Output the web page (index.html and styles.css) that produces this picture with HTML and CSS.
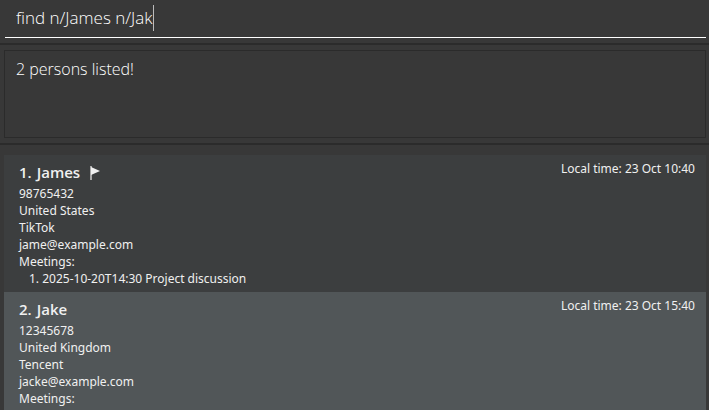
FILE: index.html
```html
<!DOCTYPE html>
<html lang="en">
<head>
<meta charset="utf-8">
<title>Contacts</title>
<link rel="stylesheet" href="styles.css">
</head>
<body>
<main class="app">
  <form class="command">
    <div class="command-line">
      <input class="command-input" type="text" aria-label="Command" value="find n/James n/Jak" spellcheck="false" autocomplete="off">
      <span class="caret"></span>
    </div>
  </form>
  <section class="result">
    <output class="result-box">2 persons listed!</output>
  </section>
  <ul class="persons">
    <li class="card">
      <div class="details">
        <h2 class="name"><span>1.</span><span>James</span>
          <svg class="flag" viewBox="0 0 10 14" aria-hidden="true"><path class="pole" d="M0 0h2v14H0z"/><path class="cloth" d="M1 1 10 5 1 9z"/></svg>
        </h2>
        <p>98765432</p>
        <p>United States</p>
        <p>TikTok</p>
        <p>jame@example.com</p>
        <p>Meetings:</p>
        <p class="meeting">1. 2025-10-20T14:30 Project discussion</p>
      </div>
      <p class="time">Local time: 23 Oct 10:40</p>
    </li>
    <li class="card selected">
      <div class="details">
        <h2 class="name"><span>2.</span><span>Jake</span></h2>
        <p>12345678</p>
        <p>United Kingdom</p>
        <p>Tencent</p>
        <p>jacke@example.com</p>
        <p>Meetings:</p>
      </div>
      <p class="time">Local time: 23 Oct 15:40</p>
    </li>
  </ul>
</main>
</body>
</html>
```
FILE: styles.css
```css
* {
  box-sizing: border-box;
}

html {
  height: 100%;
  overflow: hidden;
  background: #383838;
}

body {
  height: 100%;
  margin: 0;
  color: #f0f0f0;
  font: 12px/17px "Noto Sans", sans-serif;
}

p, h2, ul {
  margin: 0;
  padding: 0;
}

.app {
  display: flex;
  flex-direction: column;
  height: 100%;
}

.command {
  padding: 0 3px 5px 5px;
  border-bottom: 2px solid #2b2b2b;
}

.command-line {
  display: flex;
  align-items: center;
  height: 38px;
  padding: 0 11px 2px;
  border-bottom: 1px solid #fff;
}

.command-input {
  field-sizing: content;
  padding: 0;
  border: 0;
  outline: 0;
  background: none;
  color: #fff;
  font: 300 17px/26px "Open Sans", sans-serif;
}

.caret {
  width: 1px;
  height: 26px;
  background: #bbb;
}

.result {
  padding: 5px 3px 5px 4px;
  border-bottom: 2px solid #2b2b2b;
}

.result-box {
  display: block;
  height: 88px;
  padding: 5px 11px;
  border: 1px solid #2b2b2b;
  color: #fff;
  font: 300 16px/26px "Open Sans", sans-serif;
}

.persons {
  flex: 1;
  margin: 10px 3px 0 4px;
  min-height: 0;
  overflow: hidden;
  list-style: none;
}

.card {
  display: flex;
  justify-content: space-between;
  min-height: 137px;
  padding: 5px 11px 5px 15px;
  background: #3c3e3f;
}

.selected {
  background: #515658;
}

.name {
  display: flex;
  align-items: center;
  gap: 5px;
  height: 25px;
  font: 600 15px/25px "Open Sans", sans-serif;
}

.flag {
  width: 10px;
  height: 14px;
  margin-left: 5px;
}

.pole {
  fill: #a8a8a8;
}

.cloth {
  fill: #f0f0f0;
}

.meeting {
  padding-left: 10px;
}
```
